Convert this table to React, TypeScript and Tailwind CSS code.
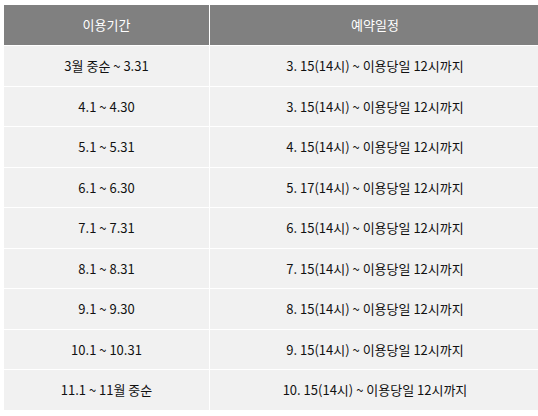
import React from "react";

const rows: [string, string][] = [
  ["3월 중순 ~ 3.31", "3. 15(14시) ~ 이용당일 12시까지"],
  ["4.1 ~ 4.30", "3. 15(14시) ~ 이용당일 12시까지"],
  ["5.1 ~ 5.31", "4. 15(14시) ~ 이용당일 12시까지"],
  ["6.1 ~ 6.30", "5. 17(14시) ~ 이용당일 12시까지"],
  ["7.1 ~ 7.31", "6. 15(14시) ~ 이용당일 12시까지"],
  ["8.1 ~ 8.31", "7. 15(14시) ~ 이용당일 12시까지"],
  ["9.1 ~ 9.30", "8. 15(14시) ~ 이용당일 12시까지"],
  ["10.1 ~ 10.31", "9. 15(14시) ~ 이용당일 12시까지"],
  ["11.1 ~ 11월 중순", "10. 15(14시) ~ 이용당일 12시까지"],
];

export default function App() {
  return (
    <div
      className="w-[538px] h-[416px] overflow-hidden bg-white pt-[5px] pl-[4px]"
      style={{ fontFamily: '"Malgun Gothic", "Noto Sans CJK KR", "Noto Sans", sans-serif' }}
    >
      <div className="grid grid-cols-[205px_330px] gap-px bg-white w-[536px]">
        <div className="h-[40px] bg-[#808080] text-white text-[13px] flex items-center justify-center">
          이용기간
        </div>
        <div className="h-[40px] bg-[#808080] text-white text-[13px] flex items-center justify-center">
          예약일정
        </div>
        {rows.map(([a, b], i) => (
          <React.Fragment key={i}>
            <div className="h-[39.5px] bg-[#f1f1f1] text-[#111] text-[13px] flex items-center justify-center">
              {a}
            </div>
            <div className="h-[39.5px] bg-[#f1f1f1] text-[#111] text-[13px] flex items-center justify-center">
              {b}
            </div>
          </React.Fragment>
        ))}
      </div>
    </div>
  );
}
